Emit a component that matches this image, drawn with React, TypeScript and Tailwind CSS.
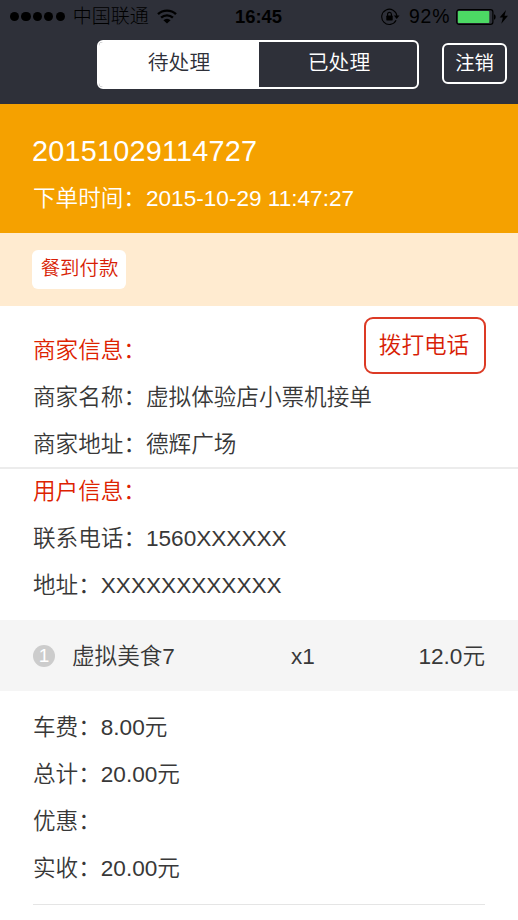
import { useState } from 'react';

const merchant = [
  { label: '商家名称', value: '虚拟体验店小票机接单' },
  { label: '商家地址', value: '德辉广场' },
];

const customer = [
  { label: '联系电话', value: '1560XXXXXX' },
  { label: '地址', value: 'XXXXXXXXXXXX' },
];

const items = [{ name: '虚拟美食7', count: 1, price: '12.0元' }];

const fees = [
  { label: '车费', value: '8.00元' },
  { label: '总计', value: '20.00元' },
  { label: '优惠', value: '' },
  { label: '实收', value: '20.00元' },
];

const Row = ({ label, value }: { label: string; value: string }) => (
  <p className="h-[47px] whitespace-nowrap">
    {label}：{value}
  </p>
);

const StatusBar = () => (
  <div className="flex h-[33px] items-center text-black">
    <div className="flex w-[235px] items-center pl-[10px]">
      <div className="flex gap-[2.1px]">
        {[0, 1, 2, 3, 4].map((i) => (
          <span key={i} className="h-[9.3px] w-[9.3px] rounded-full bg-black" />
        ))}
      </div>
      <span className="ml-[8px] text-[19px] leading-[33px] font-light">中国联通</span>
      <svg className="ml-[8px]" width="20" height="15" viewBox="0 0 20 15" fill="none">
        <path d="M1 5.2a13 13 0 0 1 18 0" stroke="#000" strokeWidth="2.4" />
        <path d="M4.1 8.7a8.6 8.6 0 0 1 11.8 0" stroke="#000" strokeWidth="2.4" />
        <path d="M10 14.6l-3.6-3.4a5 5 0 0 1 7.2 0z" fill="#000" />
      </svg>
    </div>
    <span className="w-[146px] text-[18.4px] leading-[33px] font-bold">16:45</span>
    <svg width="19" height="18" viewBox="0 0 19 18" fill="none">
      <path d="M15.1 12.3A7.6 7.6 0 1 1 15.9 8" stroke="#000" strokeWidth="1.1" />
      <path d="M12.9 7.4h5.6l-2.8 3.6z" fill="#000" />
      <rect x="5.3" y="7.6" width="6.4" height="4.8" rx="0.6" fill="#000" />
      <path d="M6.6 8V6.2a1.9 1.9 0 0 1 3.8 0V8" stroke="#000" strokeWidth="1.2" />
    </svg>
    <span className="ml-[9px] w-[47px] text-[19.4px] leading-[33px] tracking-[0.8px]">92%</span>
    <svg width="53" height="16" viewBox="0 0 53 16" fill="none">
      <rect x="0.7" y="0.7" width="36.2" height="14.6" rx="2.4" stroke="#000" strokeWidth="1.2" />
      <rect x="1.9" y="1.9" width="31.4" height="12.2" rx="0.8" fill="#4cd964" />
      <path d="M38 5.3c2.2 .6 2.2 4.8 0 5.4z" fill="#000" />
      <path d="M50 1l-6.4 7.6h3.3l-1.6 6.2 6.7-8.1h-3.5z" fill="#000" />
    </svg>
  </div>
);

const OrderPage = () => {
  const [tab, setTab] = useState('pending');
  const active = 'bg-white text-[#2e3039]';
  const inactive = 'bg-transparent text-white';

  return (
    <div className="h-[920px] w-[518px] overflow-hidden bg-white font-['Liberation_Sans','Noto_Sans_CJK_SC',sans-serif] text-[22.6px] leading-[47px] font-[350] text-[#383838]">
      <header className="h-[104px] bg-[#2e3039]">
        <StatusBar />
        <div className="flex items-start pt-[7px] pl-[97px]">
          <div className="flex h-[49px] w-[322px] overflow-hidden rounded-[6px] border-2 border-white bg-[#2e3039] text-[20.8px] leading-[42px]">
            <button onClick={() => setTab('pending')} className={`w-[160px] pb-[3px] ${tab === 'pending' ? active : inactive}`}>
              待处理
            </button>
            <button onClick={() => setTab('done')} className={`flex-1 pb-[3px] pl-[2px] ${tab === 'done' ? active : inactive}`}>
              已处理
            </button>
          </div>
          <button className="mt-[3px] ml-[23px] h-[41px] w-[65px] rounded-[6px] border-2 border-white text-[19.3px] leading-[37px] font-normal text-white">
            注销
          </button>
        </div>
      </header>

      <section className="h-[129px] bg-[#f5a100] px-[33px] pt-[24px] text-white">
        <h1 className="-ml-px text-[28.8px] leading-[47px] tracking-[0.22px]">20151029114727</h1>
        <p>下单时间：2015-10-29 11:47:27</p>
      </section>

      <section className="h-[73px] bg-[#ffebd0] px-[32px] pt-[17px]">
        <span className="block h-[39px] w-[94px] rounded-[6px] bg-white pl-px text-center text-[19.4px] leading-[37px] text-[#d81e06]">
          餐到付款
        </span>
      </section>

      <section className="flex h-[163px] justify-between border-b-2 border-[#ececec] pt-[21px] pr-[32px] pl-[33px]">
        <div>
          <h2 className="h-[47px] text-[#dd2200]">商家信息：</h2>
          {merchant.map((row) => (
            <Row key={row.label} {...row} />
          ))}
        </div>
        <button className="-mt-[10px] -ml-[40px] h-[57px] w-[122px] shrink-0 rounded-[9px] border-2 border-[#dc3a25] pt-px pr-[2px] text-[22.6px] leading-[52px] text-[#d81e06]">
          拨打电话
        </button>
      </section>

      <section className="h-[151px] px-[33px]">
        <h2 className="-mt-px h-[47px] text-[#dd2200]">用户信息：</h2>
        {customer.map((row) => (
          <Row key={row.label} {...row} />
        ))}
      </section>

      {items.map((item, i) => (
        <div key={item.name} className="mt-px flex h-[71px] items-center bg-[#f5f5f5] px-[33px]">
          <span className="h-[22px] w-[22px] rounded-full bg-[#ccc] text-center text-[19px] leading-[22px] text-white">
            {i + 1}
          </span>
          <span className="ml-[17px] w-[219px] pt-[2px]">{item.name}</span>
          <span className="pt-[2px]">x{item.count}</span>
          <span className="ml-auto pt-[2px]">{item.price}</span>
        </div>
      ))}

      <section className="mx-[33px] h-[214px] border-b border-[#e5e5e5] pt-[13px]">
        {fees.map((row) => (
          <Row key={row.label} {...row} />
        ))}
      </section>
    </div>
  );
};

export default OrderPage;
